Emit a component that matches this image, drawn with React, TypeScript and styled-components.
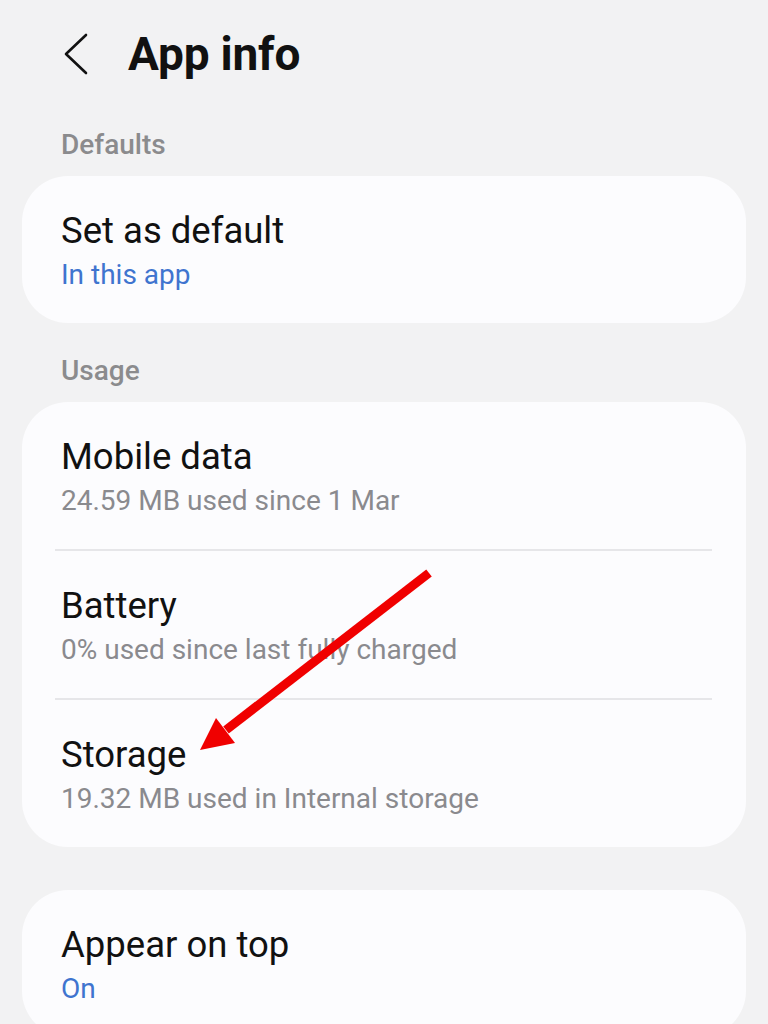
import React from 'react';
import styled, {createGlobalStyle} from 'styled-components';

const GlobalStyle = createGlobalStyle`
    html, body {
        margin: 0;
        padding: 0;
        background: #f2f2f3;
    }
    body {
        font-family: Roboto, "Noto Sans", "Liberation Sans", sans-serif;
        color: #111;
    }
`;

const Page = styled.div`
    position: relative;
    width: 768px;
    height: 1024px;
    overflow: hidden;
    padding: 0 22px;
    box-sizing: border-box;
`;

const Header = styled.header`
    display: flex;
    align-items: center;
    gap: 40px;
    height: 56px;
    padding: 26px 0 0 42px;
`;

const BackButton = styled.button`
    display: flex;
    align-items: center;
    justify-content: center;
    width: 24px;
    height: 44px;
    padding: 0;
    border: none;
    background: none;
`;

const Title = styled.h1`
    margin: 0;
    font-size: 46px;
    line-height: 56px;
    font-weight: 700;
    letter-spacing: -0.2px;
`;

const SectionLabel = styled.div<{$top: number}>`
    margin: ${p => p.$top}px 0 13px 39px;
    font-size: 28px;
    line-height: 36px;
    font-weight: 500;
    color: #8b8b8d;
`;

const Card = styled.section<{$top?: number}>`
    margin-top: ${p => p.$top ?? 0}px;
    background: #fcfcfe;
    border-radius: 46px;
    overflow: hidden;
`;

const Row = styled.div`
    padding: 33px 39px 30px;
`;

const Divider = styled.div`
    height: 2px;
    margin: 0 34px 0 33px;
    background: #e6e6e9;
`;

const RowTitle = styled.div`
    font-size: 36.5px;
    line-height: 44px;
    color: #111;
`;

const RowSub = styled.div<{$accent?: boolean}>`
    margin-top: 4px;
    font-size: 28px;
    line-height: 36px;
    color: ${p => (p.$accent ? '#3f74cf' : '#8a8a8e')};
`;

const Overlay = styled.svg`
    position: absolute;
    left: 0;
    top: 0;
    pointer-events: none;
`;

interface ItemProps {
    title: string;
    sub: string;
    accent?: boolean;
}

const Item: React.FC<ItemProps> = ({title, sub, accent}) => (
    <Row>
        <RowTitle>{title}</RowTitle>
        <RowSub $accent={accent}>{sub}</RowSub>
    </Row>
);

const usage: ItemProps[] = [
    {title: 'Mobile data', sub: '24.59 MB used since 1 Mar'},
    {title: 'Battery', sub: '0% used since last fully charged'},
    {title: 'Storage', sub: '19.32 MB used in Internal storage'},
];

export default function App() {
    return (
        <>
            <GlobalStyle />
            <Page>
                <Header>
                    <BackButton aria-label="Back">
                        <svg width="24" height="44" viewBox="0 0 24 44">
                            <polyline points="22,3 2,22 22,41" fill="none" stroke="#111" strokeWidth="2.6" strokeLinecap="round" strokeLinejoin="round" />
                        </svg>
                    </BackButton>
                    <Title>App info</Title>
                </Header>

                <SectionLabel $top={45}>Defaults</SectionLabel>
                <Card>
                    <Item title="Set as default" sub="In this app" accent />
                </Card>

                <SectionLabel $top={30}>Usage</SectionLabel>
                <Card>
                    {usage.map((u, i) => (
                        <React.Fragment key={u.title}>
                            {i > 0 && <Divider />}
                            <Item {...u} />
                        </React.Fragment>
                    ))}
                </Card>

                <Card $top={43}>
                    <Item title="Appear on top" sub="On" accent />
                </Card>

                <Overlay width="768" height="1024" viewBox="0 0 768 1024">
                    <line x1="429" y1="573" x2="226" y2="730" stroke="#f00000" strokeWidth="9" />
                    <polygon points="200,750 216,718 235,743" fill="#f00000" />
                </Overlay>
            </Page>
        </>
    );
}
